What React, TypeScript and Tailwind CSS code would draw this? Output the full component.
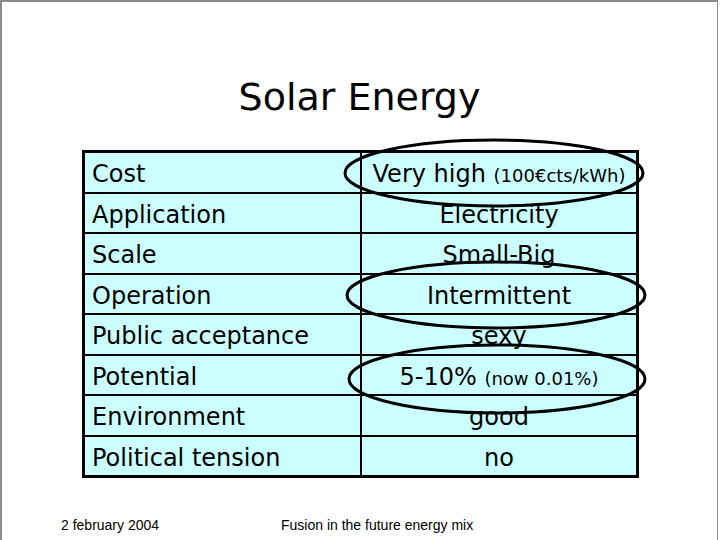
import React from 'react';

type Row = { label: string; value: React.ReactNode };

const rows: Row[] = [
  { label: 'Cost', value: <>Very high <span className="text-[18px]">(100€cts/kWh)</span></> },
  { label: 'Application', value: 'Electricity' },
  { label: 'Scale', value: 'Small-Big' },
  { label: 'Operation', value: 'Intermittent' },
  { label: 'Public acceptance', value: 'sexy' },
  { label: 'Potential', value: <>5-10% <span className="text-[18px]">(now 0.01%)</span></> },
  { label: 'Environment', value: 'good' },
  { label: 'Political tension', value: 'no' },
];

const App: React.FC = () => {
  return (
    <div className="relative w-[720px] h-[540px] bg-white overflow-hidden">
      <div className="w-[718px] h-[540px] border-t-2 border-l-2 border-r border-[#8a8a8a] flex flex-col font-['DejaVu_Sans',Verdana,sans-serif] text-black">
        <h1 className="mt-[73px] text-center text-[38px] leading-[44px] font-normal">Solar Energy</h1>

        <div className="ml-[80px] mt-[31px] w-[557px] border-[3px] border-black bg-[#ccffff] flex flex-col">
          {rows.map((row, i) => (
            <div
              key={row.label}
              className={`flex h-[38.5px] text-[24px] leading-[38.5px] ${i > 0 ? 'border-t-2 border-black box-content' : ''}`}
            >
              <div className="w-[277px] border-r-2 border-black pl-[7px] pt-[2px] whitespace-nowrap">{row.label}</div>
              <div className="flex-1 text-center pt-[2px] whitespace-nowrap">{row.value}</div>
            </div>
          ))}
        </div>

        <div className="mt-[39px] flex text-[14px] leading-[16px] font-['Liberation_Sans',Arial,sans-serif]">
          <span className="pl-[59px] w-[279px]">2 february 2004</span>
          <span>Fusion in the future energy mix</span>
        </div>
      </div>

      {/* hand-drawn highlight rings over the table */}
      <svg className="absolute left-0 top-0 pointer-events-none" width="720" height="540" viewBox="0 0 720 540">
        <ellipse cx="494" cy="173" rx="149" ry="33" fill="none" stroke="#000" strokeWidth="3" />
        <ellipse cx="496" cy="295" rx="149" ry="33" fill="none" stroke="#000" strokeWidth="3" />
        <ellipse cx="497" cy="379" rx="148" ry="34" fill="none" stroke="#000" strokeWidth="3" />
      </svg>
    </div>
  );
};

export default App;
